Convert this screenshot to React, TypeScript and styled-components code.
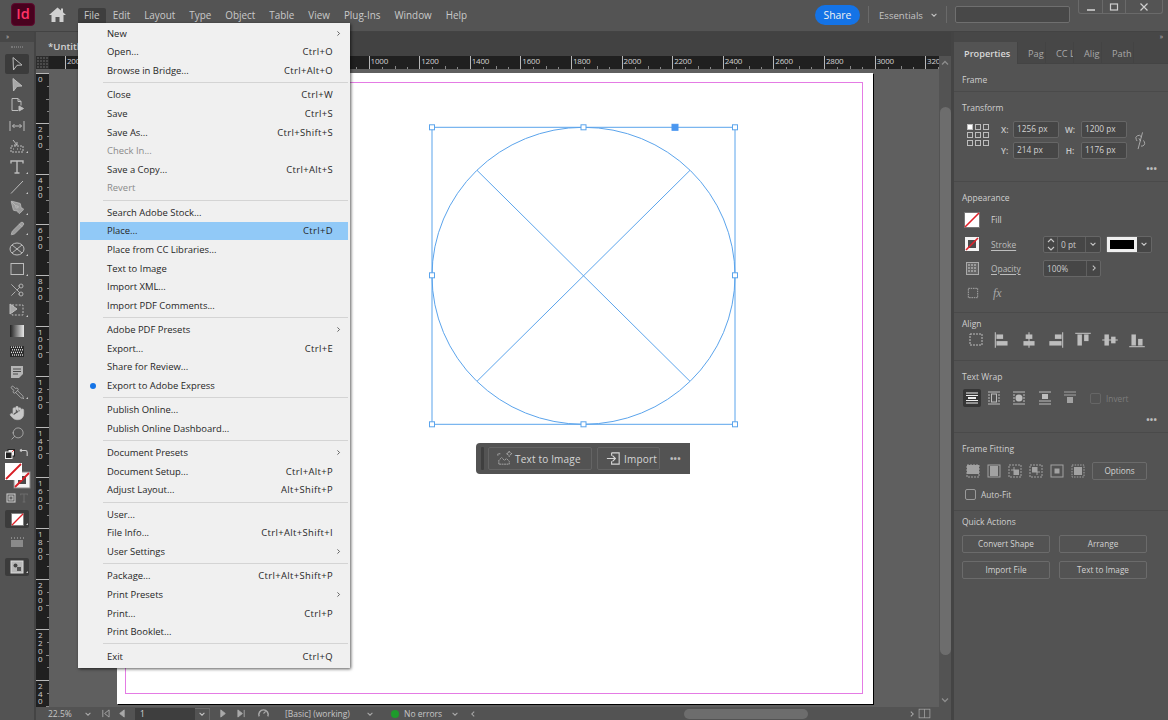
import React from "react";
import styled, { createGlobalStyle } from "styled-components";
import { Hand, Pipette, Scissors, Search, PenTool, Pencil, Link2Off } from "lucide-react";

const FONT = `"Open Sans", "Noto Sans", "Liberation Sans", sans-serif`;

const Global = createGlobalStyle`
  html, body { margin: 0; padding: 0; background: #535353; }
  * { box-sizing: border-box; }
  body { font-family: ${FONT}; font-size: 9.6px; color: #cfcfcf; }
`;

const Root = styled.div`
  position: relative; width: 1168px; height: 720px; overflow: hidden;
  display: flex; flex-direction: column; background: #535353;
`;

/* ---------- top bar ---------- */
const TopBar = styled.header`
  height: 32px; flex: none; display: flex; align-items: flex-start;
  background: #545454; border-bottom: 1px solid #434343; padding-left: 11px;
`;
const Logo = styled.div`
  width: 24px; height: 23px; margin-top: 3px; border-radius: 4px; background: #49021f;
  border: 1px solid #5e0a2e; color: #ff3366; font-size: 14.5px; font-weight: 600; line-height: 20px; text-align: center;
`;
const HomeBtn = styled.div`
  width: 43px; height: 16px; margin-top: 7px; padding-left: 2px; display: flex; justify-content: center; color: #d0d0d0;
`;
const MenuBar = styled.nav`display: flex; margin-top: 8px;`;
const MenuItem = styled.div<{ $open?: boolean }>`
  height: 15px; padding: 0 ${p => (p.$open ? 6 : 7)}px; line-height: 15px; font-size: 9.9px; color: #c9c9c9;
  background: ${p => (p.$open ? "#3e3e3e" : "transparent")}; border-radius: 2px 2px 0 0;
`;
const TopRight = styled.div`margin-left: auto; display: flex; align-items: flex-start;`;
const Share = styled.div`
  width: 45px; height: 20px; margin-top: 5px; border-radius: 10px; background: #1473e6; color: #f2f2f2;
  font-size: 10.4px; line-height: 20px; text-align: center;
`;
const VRule = styled.div<{ $ml?: number }>`width: 1px; height: 17px; margin: 6px 0 0 ${p => p.$ml ?? 0}px; background: #6a6a6a;`;
const Workspace = styled.div`
  width: 77px; height: 20px; margin: 5px 0 0; padding-left: 10px; display: flex; align-items: center; gap: 7px; color: #c4c4c4; font-size: 9.6px;
`;
const SearchBox = styled.div`
  width: 115px; height: 17px; margin: 6px 8px 0 8px; background: #484848; border: 1px solid #6f6f6f; border-radius: 2px;
`;
const WinGroup = styled.div`
  width: 85px; height: 14px; margin-right: 5px; display: grid; grid-template-columns: 24px 23px 1fr;
  border: 1px solid #6a6a6a; border-top: 0; border-radius: 0 0 3px 3px;
`;
const WinBtn = styled.div`
  display: flex; align-items: center; justify-content: center; border-right: 1px solid #6a6a6a;
  &:last-child { border-right: 0; }
`;

/* ---------- work area ---------- */
const Body = styled.div`flex: 1; min-height: 0; display: flex;`;

const Toolbox = styled.aside`
  width: 36px; flex: none; display: flex; flex-direction: column; align-items: flex-start;
  background: #535353; border-right: 2px solid #444;
`;
const PanelHead = styled.div<{ $end?: boolean }>`
  height: 10px; width: 100%; flex: none; background: #474747; color: #bdbdbd; font-size: 7px; line-height: 10px; letter-spacing: -1px;
  padding: 0 6px; text-align: ${p => (p.$end ? "right" : "left")};
`;
const Gripper = styled.div`
  width: 12px; height: 2px; margin: 4px 0 5.75px 11px; border-top: 1px dotted #777; border-bottom: 1px dotted #777;
`;
const Tool = styled.div<{ $active?: boolean; $h?: number; $corner?: boolean; $mt?: number }>`
  position: relative; width: 24px; margin-left: 5px; height: ${p => p.$h ?? 20.5}px; margin-top: ${p => p.$mt ?? 0}px; flex: none;
  display: flex; align-items: center; justify-content: center; color: #bcbcbc; border-radius: 2px;
  background: ${p => (p.$active ? "#3b3b3b" : "transparent")};
  &::after {
    content: ""; display: ${p => (p.$corner ? "block" : "none")}; position: absolute; right: 1px; bottom: 3px;
    border-left: 2.5px solid transparent; border-bottom: 2.5px solid #c8c8c8;
  }
`;
const ToolRow = styled.div<{ $mt?: number; $h: number }>`
  display: flex; width: 34px; height: ${p => p.$h}px; flex: none; align-items: center; justify-content: space-around; padding: 0 4px; margin-top: ${p => p.$mt ?? 0}px;
`;
const SwatchStack = styled.div`
  position: relative; width: 26px; height: 26px; margin: 4px 0 0 5px; flex: none;
`;

const Doc = styled.main`flex: 1; min-width: 0; display: flex; flex-direction: column;`;
const TabStrip = styled.div`height: 24px; flex: none; display: flex; background: #424242;`;
const DocTab = styled.div`
  width: 200px; background: #535353; padding: 8px 0 0 12px; font-size: 9.6px; font-weight: 600; color: #d4d4d4;
`;
const DocRow = styled.div`flex: 1; min-height: 0; display: flex;`;
const DocCol = styled.div`flex: 1; min-width: 0; display: flex; flex-direction: column; background: #5f5f5f;`;
const HRuler = styled.div`height: 13px; flex: none; display: flex; background: #202020; overflow: hidden;`;
const RulerCorner = styled.div`
  width: 13px; flex: none; background: #4a4a4a;
  background-image: repeating-linear-gradient(90deg, #2c2c2c 0 1px, transparent 1px 3px), repeating-linear-gradient(0deg, #2c2c2c 0 1px, transparent 1px 3px);
`;
const RulerLead = styled.div`width: 16px; flex: none;`;
const HSeg = styled.div`
  width: 50.6px; flex: none; height: 13px; padding-left: 1px; border-left: 1px solid #b8b8b8;
  color: #d2d2d2; font-size: 8px; line-height: 10px; letter-spacing: -0.2px;
  background-image: linear-gradient(#8a8a8a, #8a8a8a), linear-gradient(#8a8a8a, #8a8a8a), linear-gradient(#8a8a8a, #8a8a8a);
  background-size: 1px 2px, 1px 3px, 1px 2px; background-repeat: no-repeat;
  background-position: 12px 100%, 25px 100%, 37px 100%;
`;
const CanvasRow = styled.div`flex: 1; min-height: 0; display: flex; padding-top: 3.7px; overflow: hidden;`;
const VRuler = styled.div`width: 13px; flex: none; background: #202020; display: flex; flex-direction: column; overflow: hidden;`;
const VSeg = styled.div`
  height: 50.6px; flex: none; border-top: 1px solid #b8b8b8; padding: 1px 0 0 2px; display: flex; flex-direction: column;
  background-image: linear-gradient(#8a8a8a, #8a8a8a), linear-gradient(#8a8a8a, #8a8a8a), linear-gradient(#8a8a8a, #8a8a8a);
  background-size: 2px 1px, 3px 1px, 2px 1px; background-repeat: no-repeat;
  background-position: 100% 12px, 100% 25px, 100% 37px;
`;
const VDigit = styled.span`height: 7.8px; font-size: 8px; line-height: 7.8px; color: #d2d2d2;`;
const Canvas = styled.div`flex: 1; min-width: 0;`;
const Page = styled.div`
  position: relative; width: 756px; height: 631px; margin-left: 68px; padding: 9px 10px 9.5px 7.5px;
  background: #fff; box-shadow: 1px 1px 0 #000;
`;
const Guide = styled.div`width: 100%; height: 100%; border: 1px solid #e47be4;`;
const Artwork = styled.svg`position: absolute; left: 0; top: 0;`;
const FloatBar = styled.div`
  position: absolute; left: 359px; top: 370.3px; width: 214px; height: 31px; padding: 4px 0 0 5px;
  display: flex; align-items: flex-start; background: #535353; border-radius: 4px 0 0 4px;
`;
const FloatGrip = styled.div`width: 3px; height: 23px; margin-right: 4px; background: #3f3f3f; border-radius: 1px;`;
const FloatBtn = styled.div<{ $w: number }>`
  width: ${p => p.$w}px; height: 23px; margin-right: 5px; display: flex; align-items: center; gap: 2px; padding: 1px 0 0 7px;
  border: 1px solid #646464; border-radius: 2px; color: #d6d6d6; font-size: 10px; letter-spacing: 0.18px;
`;
const Dots = styled.div`
  color: #bdbdbd; font-size: 9px; font-weight: 700; letter-spacing: 0.2px; line-height: 10px;
`;
const FloatDots = styled(Dots)`margin: 7px 0 0 5px;`;

const VScroll = styled.div`
  position: relative; width: 12px; flex: none; background: #535353; color: #8d8d8d;
`;
const VThumb = styled.div`
  position: absolute; left: 1px; right: 0; top: 51px; height: 548px; border-radius: 6px; background: #6d6d6d;
`;
const ScrollArrow = styled.div<{ $bottom?: boolean }>`
  position: absolute; left: 1px; ${p => (p.$bottom ? "bottom: 2px" : "top: 2px")};
`;

const Status = styled.footer`
  height: 13px; flex: none; display: flex; align-items: center; background: #535353; color: #c6c6c6; font-size: 8.5px;
`;
const StatusText = styled.span<{ $ml: number; $w?: number }>`
  margin-left: ${p => p.$ml}px; width: ${p => (p.$w ? `${p.$w}px` : "auto")}; flex: none; white-space: nowrap;
`;
const StatusIcon = styled.span<{ $ml: number; $w?: number }>`
  margin-left: ${p => p.$ml}px; width: ${p => p.$w ?? 10}px; height: 13px; flex: none; display: flex; align-items: center; justify-content: center; color: #aaa;
`;
const PageInput = styled.div`
  width: 60px; height: 12px; margin-left: 9px; flex: none; background: #3e3e3e; padding-left: 5px; color: #d6d6d6; line-height: 12px;
`;
const PageDrop = styled.div`
  width: 15px; height: 12px; flex: none; border: 1px solid #6a6a6a; border-width: 1px 1px 0 0; display: flex; align-items: center; justify-content: center;
`;
const GreenDot = styled.span`
  width: 8px; height: 8px; margin-left: 16px; flex: none; border-radius: 50%; background: #1e9a2c;
`;
const HThumb = styled.div`
  width: 124px; height: 10px; margin-left: 206px; flex: none; border-radius: 5px; background: #6d6d6d;
`;

const Gutter = styled.div`width: 3px; flex: none; background: #444;`;

/* ---------- right panel ---------- */
const Panel = styled.aside`width: 214px; flex: none; display: flex; flex-direction: column; background: #535353;`;
const PanelTabs = styled.div`height: 22px; flex: none; display: flex; background: #474747; border-bottom: 1px solid #444;`;
const PanelTab = styled.div<{ $active?: boolean; $w: number }>`
  width: ${p => p.$w}px; flex: none; padding-left: 10px; line-height: 23px; font-size: 9.2px; overflow: hidden; white-space: nowrap;
  font-weight: ${p => (p.$active ? 600 : 400)}; color: ${p => (p.$active ? "#d8d8d8" : "#a9a9a9")};
  background: ${p => (p.$active ? "#535353" : "transparent")}; border-right: 1px solid #434343;
  height: ${p => (p.$active ? 22 : 21)}px;
`;
const Section = styled.section<{ $h: number; $last?: boolean; $pt?: number }>`
  position: relative; height: ${p => p.$h}px; flex: none; padding: ${p => p.$pt ?? 9}px 8px 0 8px;
  border-bottom: ${p => (p.$last ? "0" : "1px solid #4a4a4a")};
`;
const SectionTitle = styled.div`height: 13px; line-height: 13px; font-size: 8.5px; color: #cfcfcf;`;
const SectionDots = styled(Dots)`position: absolute; right: 11px; bottom: 7px;`;

const TransformGrid = styled.div`display: flex; align-items: flex-start; margin: 7px 0 0 5px;`;
const GridPicker = styled.svg`margin-top: 3px; flex: none;`;
const FieldGrid = styled.div`
  display: grid; grid-template-columns: 12px 46px 22px 46px; grid-auto-rows: 17px; row-gap: 4px; margin-left: 12px; align-items: center;
`;
const FieldLabel = styled.span<{ $right?: boolean }>`font-size: 8.4px; color: #c8c8c8; font-weight: 600; text-align: ${p => (p.$right ? "center" : "left")};`;
const Field = styled.div`
  height: 17px; background: #464646; border: 1px solid #666; border-radius: 2px; padding-left: 3px;
  font-size: 8.3px; line-height: 14px; color: #d4d4d4; white-space: nowrap;
`;
const LinkBox = styled.div`margin: 12px 0 0 5px; color: #c0c0c0; transform: rotate(60deg);`;
const AppearRow = styled.div<{ $h: number; $mt?: number }>`display: flex; align-items: center; height: ${p => p.$h}px; margin-top: ${p => p.$mt ?? 0}px;`;
const SwatchCell = styled.div`width: 29px; flex: none; display: flex; justify-content: center; padding-right: 9px; color: #bdbdbd;`;
const AppearLabel = styled.span<{ $dashed?: boolean; $bright?: boolean }>`
  width: 52px; flex: none; font-size: 8.4px; color: ${p => (p.$bright ? "#d2d2d2" : "#bdbdbd")}; text-decoration: ${p => (p.$dashed ? "underline" : "none")}; text-underline-offset: 2px;
`;
const Stepper = styled.div`
  display: flex; height: 17px; width: 58px; flex: none; background: #464646; border: 1px solid #666; border-radius: 2px; color: #c9c9c9; font-size: 8.4px; line-height: 15px;
`;
const StepCell = styled.div<{ $w: number; $pad?: number }>`
  width: ${p => p.$w}px; flex: none; padding-left: ${p => p.$pad ?? 0}px; display: flex; align-items: center; justify-content: ${p => (p.$pad === undefined ? "center" : "flex-start")};
  border-right: 1px solid #5f5f5f; &:last-child { border-right: 0; }
`;
const ColorWell = styled.div`
  width: 46px; height: 17px; margin-left: 5px; flex: none; display: flex; border: 1px solid #666; border-radius: 2px; background: #464646;
`;
const WellFace = styled.div`width: 30px; height: 100%; background: #f0f0f0; padding: 3px 3px; flex: none;`;
const WellInk = styled.div`width: 100%; height: 100%; background: #000;`;
const WellDrop = styled.div`flex: 1; display: flex; align-items: center; justify-content: center;`;
const IconRow = styled.div<{ $mt: number; $ml?: number }>`
  display: flex; margin: ${p => p.$mt}px 0 0 ${p => p.$ml ?? 0}px; align-items: center; color: #bdbdbd;
`;
const IconCell = styled.div<{ $w: number; $sel?: boolean; $dim?: boolean }>`
  width: ${p => p.$w}px; height: 18px; flex: none; display: flex; align-items: center; justify-content: center;
  background: ${p => (p.$sel ? "#363636" : "transparent")}; border-radius: 2px; opacity: ${p => (p.$dim ? 0.75 : 1)};
`;
const FxLabel = styled.span`
  margin-left: 11px; font-family: "Liberation Serif", serif; font-style: italic; font-size: 12px; color: #a8a8a8;
`;
const Check = styled.span<{ $dim?: boolean; $ml?: number }>`
  width: 11px; height: 11px; flex: none; margin-left: ${p => p.$ml ?? 0}px; border: 1px solid ${p => (p.$dim ? "#666" : "#9a9a9a")}; border-radius: 2px;
`;
const CheckLabel = styled.span<{ $dim?: boolean }>`margin-left: 5px; font-size: 8.3px; color: ${p => (p.$dim ? "#7c7c7c" : "#cfcfcf")};`;
const GhostBtn = styled.div<{ $w: number; $ml?: number }>`
  width: ${p => p.$w}px; height: 18px; flex: none; margin-left: ${p => p.$ml ?? 0}px; border: 1px solid #6b6b6b; border-radius: 2px;
  font-size: 8.2px; line-height: 16px; text-align: center; color: #d2d2d2; white-space: nowrap;
`;
const BtnGrid = styled.div`display: grid; grid-template-columns: 88px 88px; column-gap: 9px; row-gap: 8px; margin-top: 7px; grid-auto-rows: 18px;`;

/* ---------- File menu ---------- */
const Menu = styled.div`
  position: absolute; left: 78px; top: 23px; width: 272px; height: 645px; padding: 1px 2px 0 2px;
  background: #f0f0f0; color: #222; box-shadow: 1px 1px 3px rgba(0, 0, 0, 0.65);
`;
const Row = styled.div<{ $hot?: boolean; $off?: boolean }>`
  position: relative; height: 18.6px; display: flex; align-items: center; padding: 0 15px 0 27px; font-size: 9.45px;
  color: ${p => (p.$off ? "#8b8b8b" : "#262626")}; background: ${p => (p.$hot ? "#91c9f7" : "transparent")};
`;
const Shortcut = styled.span`margin-left: auto; font-size: 9.45px; letter-spacing: 0.36px; color: #262626;`;
const Arrow = styled.span`position: absolute; right: 6px; top: 6px; color: #555; display: flex;`;
const Bullet = styled.span`position: absolute; left: 10px; top: 6.5px; width: 6px; height: 6px; border-radius: 50%; background: #1473e6;`;
const MenuSep = styled.div`height: 5.8px; margin-left: 23px; display: flex; align-items: center; &::after { content: ""; width: 100%; height: 1px; background: #d4d4d4; }`;

/* ---------- icons ---------- */
const Glyph = styled.svg`display: block; flex: none; fill: none; stroke: currentColor; stroke-width: 1;`;
const G = ({ s = 18, children }: { s?: number; children: React.ReactNode }) => (
  <Glyph width={s} height={s} viewBox="0 0 18 18">{children}</Glyph>
);
const Chev = ({ s = 8, dir = "down" }: { s?: number; dir?: "down" | "up" | "right" | "left" }) => {
  const d = { down: "M2 3.5 L5 6.5 L8 3.5", up: "M2 6.5 L5 3.5 L8 6.5", right: "M3.5 2 L6.5 5 L3.5 8", left: "M6.5 2 L3.5 5 L6.5 8" }[dir];
  return <Glyph width={s} height={s} viewBox="0 0 10 10"><path d={d} strokeWidth={1.3} /></Glyph>;
};
const NoFill = ({ s = 16 }: { s?: number }) => (
  <svg width={s} height={s} viewBox="0 0 16 16" style={{ display: "block" }}>
    <rect x="0.5" y="0.5" width="15" height="15" fill="#fff" stroke="#777" />
    <path d="M1 15 L15 1" stroke="#e0222a" strokeWidth="1.6" />
  </svg>
);
const NoStroke = () => (
  <svg width="14" height="14" viewBox="0 0 14 14" style={{ display: "block" }}>
    <rect x="0" y="0" width="14" height="14" fill="#f4f4f4" />
    <rect x="3" y="3" width="8" height="8" fill="#4b4b4b" />
    <path d="M1 13 L13 1" stroke="#e0222a" strokeWidth="1.6" />
  </svg>
);

const toolIcons: { corner?: boolean; active?: boolean; icon: React.ReactNode }[] = [
  { active: true, icon: <G><path d="M5 2.5 L14 10 L9 10.3 L5.5 15 Z" /></G> },
  { icon: <G><path d="M5 2.5 L14 10 L9 10.3 L5.5 15 Z" fill="#a8a8a8" /></G> },
  { icon: <G><path d="M4 2.5h6l3 3v4M4 2.5v12h6M10 2.5v3h3" /><path d="M11 10l4.5 2.5L11 15z" fill="currentColor" /></G> },
  { icon: <G><path d="M2 4v10M16 4v10M4.5 9h9M4.5 9l2-2M4.5 9l2 2M13.5 9l-2-2M13.5 9l-2 2" /></G> },
  { corner: true, icon: <G><path d="M3 9h12v6H3z" strokeDasharray="2 1" /><path d="M5 3l4 5M9 8V5M9 8H6" /><path d="M5 12h1M9 12h1M12 12h1" /></G> },
  { corner: true, icon: <G s={18}><path d="M3 5.5V3h12v2.5M9 3v12M6.5 15h5" strokeWidth={1.4} /></G> },
  { corner: true, icon: <G><path d="M3 15.5 L15 3" /></G> },
  { corner: true, icon: <PenTool size={15} fill="#9a9a9a" strokeWidth={1.2} /> },
  { corner: true, icon: <Pencil size={15} fill="#9a9a9a" strokeWidth={1.2} /> },
  { corner: true, icon: <G><ellipse cx="9" cy="9" rx="7" ry="6" /><path d="M4 5l10 8M14 5L4 13" /></G> },
  { corner: true, icon: <G><rect x="3" y="3.5" width="12.5" height="11" /></G> },
  { icon: <Scissors size={16} strokeWidth={1.3} style={{ transform: "scaleX(-1)" }} /> },
  { corner: true, icon: <G><rect x="4" y="4" width="11" height="10" strokeDasharray="2 1.4" /><path d="M2 3l7 5-7 5z" fill="#a8a8a8" /></G> },
  { icon: (
    <svg width="14" height="12" viewBox="0 0 14 12"><defs><linearGradient id="tg"><stop offset="0" stopColor="#222" /><stop offset="1" stopColor="#e8e8e8" /></linearGradient></defs><rect width="14" height="12" fill="url(#tg)" /></svg>
  ) },
  { icon: (
    <svg width="14" height="11" viewBox="0 0 14 11">
      <rect width="14" height="11" fill="#2b2b2b" />
      {Array.from({ length: 24 }, (_, i) => (
        <rect key={i} x={(i % 6) * 2 + (Math.floor(i / 6) % 2) + 1} y={Math.floor(i / 6) * 2.6 + 0.5} width="1" height="1.4" fill="#ddd" />
      ))}
    </svg>
  ) },
  { icon: <G><path d="M3 3h12v8l-4 4H3z" fill="#b5b5b5" stroke="none" /><path d="M5 6h8M5 8.5h8M5 11h5" stroke="#4a4a4a" /></G> },
  { corner: true, icon: <Pipette size={15} strokeWidth={1.2} style={{ transform: "scaleX(-1)" }} /> },
  { icon: <Hand size={16} fill="#c8c8c8" strokeWidth={1} /> },
  { icon: <Search size={15} strokeWidth={1.2} style={{ transform: "scaleX(-1)" }} /> },
];

const MENU: ({ t?: string; k?: string; off?: boolean; sub?: boolean; hot?: boolean; dot?: boolean })[][] = [
  [{ t: "New", sub: true }, { t: "Open...", k: "Ctrl+O" }, { t: "Browse in Bridge...", k: "Ctrl+Alt+O" }],
  [{ t: "Close", k: "Ctrl+W" }, { t: "Save", k: "Ctrl+S" }, { t: "Save As...", k: "Ctrl+Shift+S" }, { t: "Check In...", off: true }, { t: "Save a Copy...", k: "Ctrl+Alt+S" }, { t: "Revert", off: true }],
  [{ t: "Search Adobe Stock..." }, { t: "Place...", k: "Ctrl+D", hot: true }, { t: "Place from CC Libraries..." }, { t: "Text to Image" }, { t: "Import XML..." }, { t: "Import PDF Comments..." }],
  [{ t: "Adobe PDF Presets", sub: true }, { t: "Export...", k: "Ctrl+E" }, { t: "Share for Review..." }, { t: "Export to Adobe Express", dot: true }],
  [{ t: "Publish Online..." }, { t: "Publish Online Dashboard..." }],
  [{ t: "Document Presets", sub: true }, { t: "Document Setup...", k: "Ctrl+Alt+P" }, { t: "Adjust Layout...", k: "Alt+Shift+P" }],
  [{ t: "User..." }, { t: "File Info...", k: "Ctrl+Alt+Shift+I" }, { t: "User Settings", sub: true }],
  [{ t: "Package...", k: "Ctrl+Alt+Shift+P" }, { t: "Print Presets", sub: true }, { t: "Print...", k: "Ctrl+P" }, { t: "Print Booklet..." }],
  [{ t: "Exit", k: "Ctrl+Q" }],
];

const hLabels = ["200", "0", "200", "400", "600", "800", "1000", "1200", "1400", "1600", "1800", "2000", "2200", "2400", "2600", "2800", "3000", "3200"];
const vLabels = ["0", "200", "400", "600", "800", "1000", "1200", "1400", "1600", "1800", "2000", "2200", "2400"];

const Handle = ({ x, y, solid }: { x: number; y: number; solid?: boolean }) =>
  solid ? (
    <rect x={x - 3} y={y - 3} width="6" height="6" fill="#4a97f0" stroke="#4a97f0" />
  ) : (
    <rect x={x - 2.5} y={y - 2.5} width="5" height="5" fill="#fff" stroke="#5ba4ec" />
  );

const A = 20;
const alignIcons = [
  <G key="0" s={A}><path d="M3 2v14" /><rect x="4" y="4" width="6" height="4" fill="currentColor" stroke="none" /><rect x="4" y="10" width="10" height="4" fill="currentColor" stroke="none" /></G>,
  <G key="1" s={A}><path d="M9 2v14" /><rect x="6" y="4" width="6" height="4" fill="currentColor" stroke="none" /><rect x="4" y="10" width="10" height="4" fill="currentColor" stroke="none" /></G>,
  <G key="2" s={A}><path d="M15 2v14" /><rect x="8" y="4" width="6" height="4" fill="currentColor" stroke="none" /><rect x="3" y="10" width="11" height="4" fill="currentColor" stroke="none" /></G>,
  <G key="3" s={A}><path d="M2 3h14" /><rect x="4" y="4" width="4" height="10" fill="currentColor" stroke="none" /><rect x="10" y="4" width="4" height="6" fill="currentColor" stroke="none" /></G>,
  <G key="4" s={A}><path d="M2 9h14" /><rect x="4" y="4" width="4" height="10" fill="currentColor" stroke="none" /><rect x="10" y="6" width="4" height="6" fill="currentColor" stroke="none" /></G>,
  <G key="5" s={A}><path d="M2 15h14" /><rect x="4" y="4" width="4" height="10" fill="currentColor" stroke="none" /><rect x="10" y="8" width="4" height="6" fill="currentColor" stroke="none" /></G>,
];
const wrapIcons = [
  <G key="0"><path d="M3 4h12M3 6.5h12M3 11.5h12M3 14h12" stroke="#eee" /><rect x="5" y="8" width="8" height="2" fill="#eee" stroke="none" /></G>,
  <G key="1"><path d="M3 3h12M3 15h12M3 6h2M3 9h2M3 12h2M13 6h2M13 9h2M13 12h2" /><rect x="6.5" y="5" width="5" height="8" /></G>,
  <G key="2"><path d="M3 3h12M3 15h12M3 6h2M3 9h2M3 12h2M13 6h2M13 9h2M13 12h2" /><circle cx="9" cy="9" r="3.5" fill="currentColor" stroke="none" /></G>,
  <G key="3"><path d="M3 3h12M3 12h12M3 15h12" /><rect x="6" y="5" width="6" height="5" fill="currentColor" stroke="none" /></G>,
  <G key="4"><path d="M3 3h12M3 6h12" /><rect x="6" y="8" width="6" height="6" fill="currentColor" stroke="none" /></G>,
];
const fitIcons = [
  <G key="0"><rect x="3" y="3" width="12" height="12" strokeDasharray="2 1" /><rect x="3" y="3" width="12" height="9" fill="currentColor" stroke="none" /></G>,
  <G key="1"><rect x="3" y="3" width="12" height="12" /><rect x="5" y="4" width="8" height="10" fill="currentColor" stroke="none" /></G>,
  <G key="2"><rect x="3" y="3" width="12" height="12" strokeDasharray="2 1" /><rect x="8" y="8" width="5" height="5" fill="currentColor" stroke="none" /><path d="M8 5v8M5 8h8" /></G>,
  <G key="3"><rect x="3" y="3" width="12" height="12" strokeDasharray="2 1" /><rect x="5" y="5" width="5" height="5" fill="currentColor" stroke="none" /><path d="M10 5v8M5 10h8" /></G>,
  <G key="4"><rect x="3" y="3" width="12" height="12" /><rect x="6.5" y="6.5" width="5" height="5" fill="currentColor" stroke="none" /></G>,
  <G key="5"><rect x="3" y="3" width="12" height="12" strokeDasharray="1.5 1.2" /><rect x="5" y="5" width="8" height="8" fill="currentColor" stroke="none" /></G>,
];

export default function App() {
  return (
    <Root>
      <Global />
      <TopBar>
        <Logo>Id</Logo>
        <HomeBtn>
          <svg width="17" height="15" viewBox="0 0 17 15" fill="currentColor"><path d="M8.5 0.5 L12 3.5 V1.5 H14 V5.3 L17 8 H14.5 V15 H10.5 V10 H6.5 V15 H2.5 V8 H0 Z" /></svg>
        </HomeBtn>
        <MenuBar>
          {["File", "Edit", "Layout", "Type", "Object", "Table", "View", "Plug-Ins", "Window", "Help"].map((m, i) => (
            <MenuItem key={m} $open={i === 0}>{m}</MenuItem>
          ))}
        </MenuBar>
        <TopRight>
          <Share>Share</Share>
          <VRule $ml={8} />
          <Workspace>Essentials <Chev /></Workspace>
          <VRule />
          <SearchBox />
          <WinGroup>
            <WinBtn><Glyph width="10" height="10" viewBox="0 0 10 10"><path d="M1 8h8" strokeWidth="1.6" /></Glyph></WinBtn>
            <WinBtn><Glyph width="10" height="10" viewBox="0 0 10 10"><rect x="1.5" y="2" width="7" height="6" strokeWidth="1.2" /></Glyph></WinBtn>
            <WinBtn><Glyph width="10" height="10" viewBox="0 0 10 10"><path d="M1.5 1.5l7 7M8.5 1.5l-7 7" strokeWidth="1.2" /></Glyph></WinBtn>
          </WinGroup>
        </TopRight>
      </TopBar>

      <Body>
        <Toolbox>
          <PanelHead>››</PanelHead>
          <Gripper />
          {toolIcons.map((t, i) => (
            <Tool key={i} $active={t.active} $corner={t.corner}>{t.icon}</Tool>
          ))}
          <ToolRow $mt={5} $h={11}>
            <svg width="10" height="10" viewBox="0 0 10 10"><rect x="3" y="0.5" width="6.5" height="6.5" fill="#eee" stroke="#222" /><path d="M3 7l6-6" stroke="#d22" /><rect x="0.5" y="3" width="6.5" height="6.5" fill="#222" stroke="#eee" /></svg>
            <G s={11}><path d="M3 4h9a3 3 0 0 1 3 3v6M3 4l3-2M3 4l3 2" strokeWidth="1.8" /></G>
          </ToolRow>
          <SwatchStack>
            <svg width="26" height="26" viewBox="0 0 26 26">
              <rect x="9" y="9" width="16" height="16" fill="#f4f4f4" stroke="#888" />
              <rect x="13" y="13" width="8" height="8" fill="#4b4b4b" />
              <path d="M10 24 L24 10" stroke="#d81e26" strokeWidth="1.8" />
              <rect x="0" y="0" width="17" height="17" fill="#fff" />
              <path d="M1 16 L16 1" stroke="#d81e26" strokeWidth="1.8" />
            </svg>
          </SwatchStack>
          <ToolRow $mt={3} $h={12}>
            <G s={12}><rect x="3" y="3" width="12" height="12" strokeWidth="1.6" /><rect x="6" y="6" width="6" height="6" fill="#666" strokeWidth="1.4" /></G>
            <G s={12}><path d="M4 5V3h10v2M9 3v12M7 15h4" stroke="#6d6d6d" strokeWidth="1.6" /></G>
          </ToolRow>
          <Tool $active $corner $h={18} $mt={6}><NoFill s={13} /></Tool>
          <Tool $h={18} $mt={6}><G><rect x="3" y="6" width="12" height="7" fill="#8a8a8a" stroke="none" /><path d="M3 4h1M6 4h1M9 4h1M12 4h1M15 4h1" /></G></Tool>
          <Tool $active $corner $h={18} $mt={6}>
            <G><rect x="3" y="3" width="12" height="12" fill="#b8b8b8" stroke="#ddd" /><circle cx="7.5" cy="7.5" r="2" fill="#444" stroke="none" /><rect x="9" y="9" width="4" height="4" fill="#555" stroke="none" /></G>
          </Tool>
        </Toolbox>

        <Doc>
          <TabStrip><DocTab>*Untitled-1 @ 23%</DocTab></TabStrip>
          <DocRow>
            <DocCol>
              <HRuler>
                <RulerCorner />
                <RulerLead />
                {hLabels.map((l, i) => <HSeg key={i}>{l}</HSeg>)}
              </HRuler>
              <CanvasRow>
                <VRuler>
                  {vLabels.map((l, i) => (
                    <VSeg key={i}>{l.split("").map((d, j) => <VDigit key={j}>{d}</VDigit>)}</VSeg>
                  ))}
                </VRuler>
                <Canvas>
                  <Page>
                    <Guide />
                    <Artwork width="756" height="631" viewBox="117 72.7 756 631" fill="none" stroke="#5ba4ec" strokeWidth="1">
                      <rect x="432" y="127" width="303" height="297" />
                      <ellipse cx="583.5" cy="275.5" rx="151.5" ry="148.5" />
                      <path d="M477 170 L690 381 M690 170 L477 381" />
                      <Handle x={432} y={127} /><Handle x={583.5} y={127} /><Handle x={735} y={127} />
                      <Handle x={432} y={275} /><Handle x={735} y={275} />
                      <Handle x={432} y={424} /><Handle x={583.5} y={424} /><Handle x={735} y={424} />
                      <Handle x={675} y={127} solid />
                    </Artwork>
                    <FloatBar>
                      <FloatGrip />
                      <FloatBtn $w={104}>
                        <G s={17}><path d="M2 6V4h3M13 3l1-2 1 2 2 1-2 1-1 2-1-2-2-1zM3 15v-4l3-3 3 3 2-2 3 3v3z" strokeDasharray="2 0.6" stroke="#aaa" /></G>
                        Text to Image
                      </FloatBtn>
                      <FloatBtn $w={63}>
                        <G s={17}><path d="M7 3h8v12H7v-3M7 6V3M2 9h9M8 6l3 3-3 3" strokeWidth="1.2" /></G>
                        Import
                      </FloatBtn>
                      <FloatDots>•••</FloatDots>
                    </FloatBar>
                  </Page>
                </Canvas>
              </CanvasRow>
            </DocCol>
            <VScroll>
              <ScrollArrow><Chev s={10} dir="up" /></ScrollArrow>
              <VThumb />
              <ScrollArrow $bottom><Chev s={10} /></ScrollArrow>
            </VScroll>
          </DocRow>
          <Status>
            <StatusText $ml={12} $w={24}>22.5%</StatusText>
            <StatusIcon $ml={11}><Chev /></StatusIcon>
            <StatusIcon $ml={7}><Glyph width="9" height="9" viewBox="0 0 10 10" fill="currentColor"><path d="M2 1v8M9 1L4 5l5 4z" /></Glyph></StatusIcon>
            <StatusIcon $ml={6}><Glyph width="9" height="9" viewBox="0 0 10 10"><path d="M8 1L3 5l5 4z" fill="currentColor" /></Glyph></StatusIcon>
            <PageInput>1</PageInput>
            <PageDrop><Chev /></PageDrop>
            <StatusIcon $ml={8}><Glyph width="9" height="9" viewBox="0 0 10 10"><path d="M2 1l5 4-5 4z" fill="currentColor" /></Glyph></StatusIcon>
            <StatusIcon $ml={8}><Glyph width="9" height="9" viewBox="0 0 10 10"><path d="M8 1v8M1 1l5 4-5 4z" fill="currentColor" /></Glyph></StatusIcon>
            <StatusIcon $ml={10} $w={14}><G s={13}><path d="M3 13a6.5 6.5 0 1 1 12 0" strokeWidth="2" /><path d="M9 9l3-3" strokeWidth="1.5" /></G></StatusIcon>
            <StatusText $ml={15} $w={76}>[Basic] (working)</StatusText>
            <StatusIcon $ml={4}><Chev /></StatusIcon>
            <GreenDot />
            <StatusText $ml={5} $w={34}>No errors</StatusText>
            <StatusIcon $ml={12}><Chev /></StatusIcon>
            <StatusIcon $ml={8}><Chev dir="left" /></StatusIcon>
            <HThumb />
            <StatusIcon $ml={99}><Chev dir="right" /></StatusIcon>
            <StatusIcon $ml={0} $w={14}><G s={13}><rect x="1.5" y="3" width="15" height="12" /><path d="M9 3v12" /></G></StatusIcon>
          </Status>
        </Doc>

        <Gutter />

        <Panel>
          <PanelHead $end>››</PanelHead>
          <PanelTabs>
            <PanelTab $active $w={64}>Properties</PanelTab>
            <PanelTab $w={28}>Pag</PanelTab>
            <PanelTab $w={28}>CC L</PanelTab>
            <PanelTab $w={28}>Alig</PanelTab>
            <PanelTab $w={32}>Path</PanelTab>
          </PanelTabs>
          <Section $h={28}><SectionTitle>Frame</SectionTitle></Section>
          <Section $h={90}>
            <SectionTitle>Transform</SectionTitle>
            <TransformGrid>
              <GridPicker width="22" height="22" viewBox="0 0 22 22" fill="none" stroke="#bdbdbd">
                {[0, 1, 2].flatMap(r => [0, 1, 2].map(c => (
                  <rect key={`${r}${c}`} x={c * 8 + 0.5} y={r * 8 + 0.5} width="5" height="5" fill={r + c === 0 ? "#fff" : "none"} />
                )))}
              </GridPicker>
              <FieldGrid>
                <FieldLabel>X:</FieldLabel><Field>1256 px</Field><FieldLabel $right>W:</FieldLabel><Field>1200 px</Field>
                <FieldLabel>Y:</FieldLabel><Field>214 px</Field><FieldLabel $right>H:</FieldLabel><Field>1176 px</Field>
              </FieldGrid>
              <LinkBox><Link2Off size={14} strokeWidth={1.2} /></LinkBox>
            </TransformGrid>
            <SectionDots>•••</SectionDots>
          </Section>
          <Section $h={131}>
            <SectionTitle>Appearance</SectionTitle>
            <AppearRow $h={25} $mt={3}>
              <SwatchCell><NoFill /></SwatchCell><AppearLabel $bright>Fill</AppearLabel>
            </AppearRow>
            <AppearRow $h={24}>
              <SwatchCell><NoStroke /></SwatchCell><AppearLabel $dashed>Stroke</AppearLabel>
              <Stepper>
                <StepCell $w={14}>
                  <Glyph width="10" height="15" viewBox="0 0 10 15"><path d="M2 5l3-3 3 3M2 10l3 3 3-3" strokeWidth="1.1" /></Glyph>
                </StepCell>
                <StepCell $w={28} $pad={3}>0 pt</StepCell>
                <StepCell $w={14}><Chev /></StepCell>
              </Stepper>
              <ColorWell><WellFace><WellInk /></WellFace><WellDrop><Chev /></WellDrop></ColorWell>
            </AppearRow>
            <AppearRow $h={24}>
              <SwatchCell>
                <svg width="13" height="13" viewBox="0 0 13 13" fill="#9a9a9a"><rect x="0.5" y="0.5" width="12" height="12" fill="#666" stroke="#aaa" />{[2, 5, 8].flatMap(a => [2, 5, 8].map(b => <rect key={`${a}${b}`} x={a} y={b} width="2" height="2" />))}</svg>
              </SwatchCell>
              <AppearLabel $dashed>Opacity</AppearLabel>
              <Stepper>
                <StepCell $w={43} $pad={3}>100%</StepCell>
                <StepCell $w={13}><Chev dir="right" /></StepCell>
              </Stepper>
            </AppearRow>
            <IconRow $mt={4} $ml={2}>
              <IconCell $w={18}><G s={14}><rect x="3" y="3" width="12" height="12" strokeDasharray="2 1" /></G></IconCell>
              <FxLabel>fx</FxLabel>
            </IconRow>
          </Section>
          <Section $h={48} $pt={4}>
            <SectionTitle>Align</SectionTitle>
            <IconRow $mt={1} $ml={1}>
              <IconCell $w={25}><G><rect x="3" y="3" width="12" height="11" strokeDasharray="2 1" /></G></IconCell>
              {alignIcons.map((ic, i) => <IconCell key={i} $w={27}>{ic}</IconCell>)}
            </IconRow>
          </Section>
          <Section $h={72}>
            <SectionTitle>Text Wrap</SectionTitle>
            <IconRow $mt={6} $ml={1}>
              {wrapIcons.map((ic, i) => <IconCell key={i} $w={i === 0 ? 18 : 25.5} $sel={i === 0} $dim={i === 4}>{ic}</IconCell>)}
              <Check $dim $ml={7} />
              <CheckLabel $dim>Invert</CheckLabel>
            </IconRow>
            <SectionDots>•••</SectionDots>
          </Section>
          <Section $h={78}>
            <SectionTitle>Frame Fitting</SectionTitle>
            <IconRow $mt={7} $ml={0}>
              {fitIcons.map((ic, i) => <IconCell key={i} $w={21} $dim>{ic}</IconCell>)}
              <GhostBtn $w={55} $ml={4}>Options</GhostBtn>
            </IconRow>
            <IconRow $mt={9} $ml={3}><Check /><CheckLabel>Auto-Fit</CheckLabel></IconRow>
          </Section>
          <Section $h={100} $last $pt={4}>
            <SectionTitle>Quick Actions</SectionTitle>
            <BtnGrid>
              <GhostBtn $w={88}>Convert Shape</GhostBtn>
              <GhostBtn $w={88}>Arrange</GhostBtn>
              <GhostBtn $w={88}>Import File</GhostBtn>
              <GhostBtn $w={88}>Text to Image</GhostBtn>
            </BtnGrid>
          </Section>
        </Panel>
      </Body>

      <Menu>
        {MENU.map((group, gi) => (
          <React.Fragment key={gi}>
            {gi > 0 && <MenuSep />}
            {group.map(it => (
              <Row key={it.t} $hot={it.hot} $off={it.off}>
                {it.dot && <Bullet />}
                {it.t}
                {it.k && <Shortcut>{it.k}</Shortcut>}
                {it.sub && <Arrow><Chev s={7} dir="right" /></Arrow>}
              </Row>
            ))}
          </React.Fragment>
        ))}
      </Menu>
    </Root>
  );
}
